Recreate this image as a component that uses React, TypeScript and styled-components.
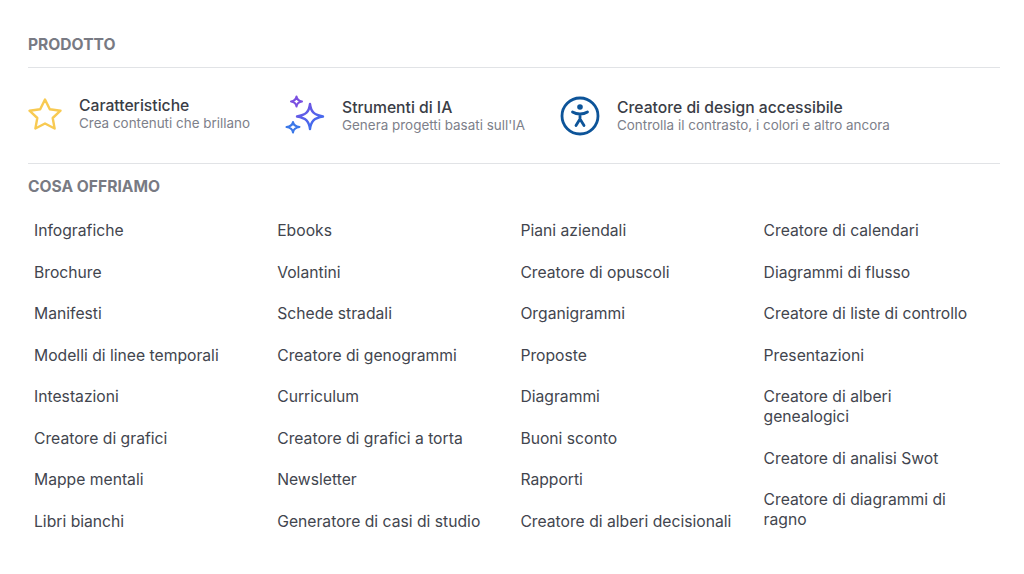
import styled, { createGlobalStyle } from "styled-components";

const GlobalStyle = createGlobalStyle`
  html, body {
    margin: 0;
    padding: 0;
    background: #fff;
    font-family: Inter, "Liberation Sans", sans-serif;
  }
`;

const Page = styled.div`
  width: 1024px;
  height: 574px;
  box-sizing: border-box;
  padding: 36px 24px 0 28px;
  overflow: hidden;
`;
const Heading = styled.h2`
  margin: 0;
  font-size: 15.6px;
  line-height: 18px;
  font-weight: 700;
  color: #787a83;
`;
const Rule = styled.hr<{ $top: number }>`
  margin: ${(props) => props.$top}px 0 0;
  border: 0;
  border-top: 1px solid #e1e3e6;
`;
const Features = styled.div`
  display: flex;
  align-items: center;
  height: 95px;
`;
const Feature = styled.div<{ $width: number; $lift: number }>`
  display: flex;
  align-items: center;
  width: ${(props) => props.$width}px;
  padding-bottom: ${(props) => props.$lift}px;
  box-sizing: border-box;
`;
const IconSlot = styled.div<{ $width: number }>`
  display: flex;
  flex: none;
  width: ${(props) => props.$width}px;
`;
const FeatureText = styled.div`
  display: flex;
  flex-direction: column;
`;
const FeatureTitle = styled.div`
  font-size: 15.7px;
  line-height: 19px;
  font-weight: 500;
  color: #3a3d46;
`;
const FeatureSub = styled.div`
  font-size: 13.45px;
  line-height: 17px;
  color: #7d808a;
`;
const OfferHeading = styled(Heading)`
  margin-top: 14px;
`;
const Columns = styled.div`
  display: grid;
  grid-template-columns: repeat(4, 243.2px);
  margin-top: 14.4px;
`;
const Column = styled.ul`
  margin: 0;
  padding: 0;
  list-style: none;
`;
const Item = styled.li`
  padding: 10.75px 22px 10.75px 6px;
  font-size: 15.7px;
  line-height: 20px;
  color: #42454e;
`;

const columns = [
  ["Infografiche", "Brochure", "Manifesti", "Modelli di linee temporali", "Intestazioni", "Creatore di grafici", "Mappe mentali", "Libri bianchi"],
  ["Ebooks", "Volantini", "Schede stradali", "Creatore di genogrammi", "Curriculum", "Creatore di grafici a torta", "Newsletter", "Generatore di casi di studio"],
  ["Piani aziendali", "Creatore di opuscoli", "Organigrammi", "Proposte", "Diagrammi", "Buoni sconto", "Rapporti", "Creatore di alberi decisionali"],
  ["Creatore di calendari", "Diagrammi di flusso", "Creatore di liste di controllo", "Presentazioni", "Creatore di alberi genealogici", "Creatore di analisi Swot", "Creatore di diagrammi di ragno"],
];

function StarIcon() {
  return (
    <svg width="36" height="34" viewBox="0 0 36 34" fill="none">
      <path
        d="M17 2.500 21.800 12.200 32.500 13.700 24.700 21 26.600 31.500 17 26.500 7.400 31.500 9.300 21 1.500 13.700 12.200 12.200Z"
        stroke="#f8ca52"
        strokeWidth="2.400"
        strokeLinejoin="round"
      />
    </svg>
  );
}

function SparkleIcon() {
  return (
    <svg width="40" height="42" viewBox="0 0 40 42" fill="none">
      <defs>
        <linearGradient id="spark" x1="0" y1="0" x2="0.6" y2="1">
          <stop offset="0" stopColor="#7a4fe0" />
          <stop offset="1" stopColor="#3b6ff0" />
        </linearGradient>
      </defs>
      <path
        d="M25 9C26 17 29 20 38 21.500 29 23 26 26 25 34 24 26 21 23 12 21.500 21 20 24 17 25 9Z"
        stroke="url(#spark)"
        strokeWidth="2.400"
        strokeLinejoin="round"
      />
      <path
        d="M11.500 1.500C12 4.500 13.500 6 17 6.500 13.500 7 12 8.500 11.500 11.500 11 8.500 9.500 7 6 6.500 9.500 6 11 4.500 11.500 1.500Z"
        stroke="#7a4fe0"
        strokeWidth="2"
        strokeLinejoin="round"
      />
      <path
        d="M8 27C8.500 30 10 31.500 14.500 32 10 32.500 8.500 34 8 37.500 7.500 34 6 32.500 1.500 32 6 31.500 7.500 30 8 27Z"
        stroke="#3b78e8"
        strokeWidth="2"
        strokeLinejoin="round"
      />
    </svg>
  );
}

function AccessIcon() {
  return (
    <svg width="40" height="40" viewBox="0 0 40 40" fill="none">
      <circle cx="20" cy="20" r="18" stroke="#0d5499" strokeWidth="2.800" />
      <circle cx="20" cy="11" r="2.800" fill="#0d5499" />
      <path
        d="M12.500 16C15 17.500 17.500 18 20 18 22.500 18 25 17.500 27.500 16M20 18V23M20 23 16 29.500M20 23 24 29.500"
        stroke="#0d5499"
        strokeWidth="2.800"
        strokeLinecap="round"
        strokeLinejoin="round"
      />
    </svg>
  );
}

export default function App() {
  return (
    <Page>
      <GlobalStyle />
      <Heading>PRODOTTO</Heading>
      <Rule $top={13} />
      <Features>
        <Feature $width={257} $lift={4}>
          <IconSlot $width={51}>
            <StarIcon />
          </IconSlot>
          <FeatureText>
            <FeatureTitle>Caratteristiche</FeatureTitle>
            <FeatureSub>Crea contenuti che brillano</FeatureSub>
          </FeatureText>
        </Feature>
        <Feature $width={275} $lift={0}>
          <IconSlot $width={57}>
            <SparkleIcon />
          </IconSlot>
          <FeatureText>
            <FeatureTitle>Strumenti di IA</FeatureTitle>
            <FeatureSub>Genera progetti basati sull'IA</FeatureSub>
          </FeatureText>
        </Feature>
        <Feature $width={400} $lift={0}>
          <IconSlot $width={57}>
            <AccessIcon />
          </IconSlot>
          <FeatureText>
            <FeatureTitle>Creatore di design accessibile</FeatureTitle>
            <FeatureSub>Controlla il contrasto, i colori e altro ancora</FeatureSub>
          </FeatureText>
        </Feature>
      </Features>
      <Rule $top={0} />
      <OfferHeading>COSA OFFRIAMO</OfferHeading>
      <Columns>
        {columns.map((items) => (
          <Column key={items[0]}>
            {items.map((item) => (
              <Item key={item}>{item}</Item>
            ))}
          </Column>
        ))}
      </Columns>
    </Page>
  );
}
